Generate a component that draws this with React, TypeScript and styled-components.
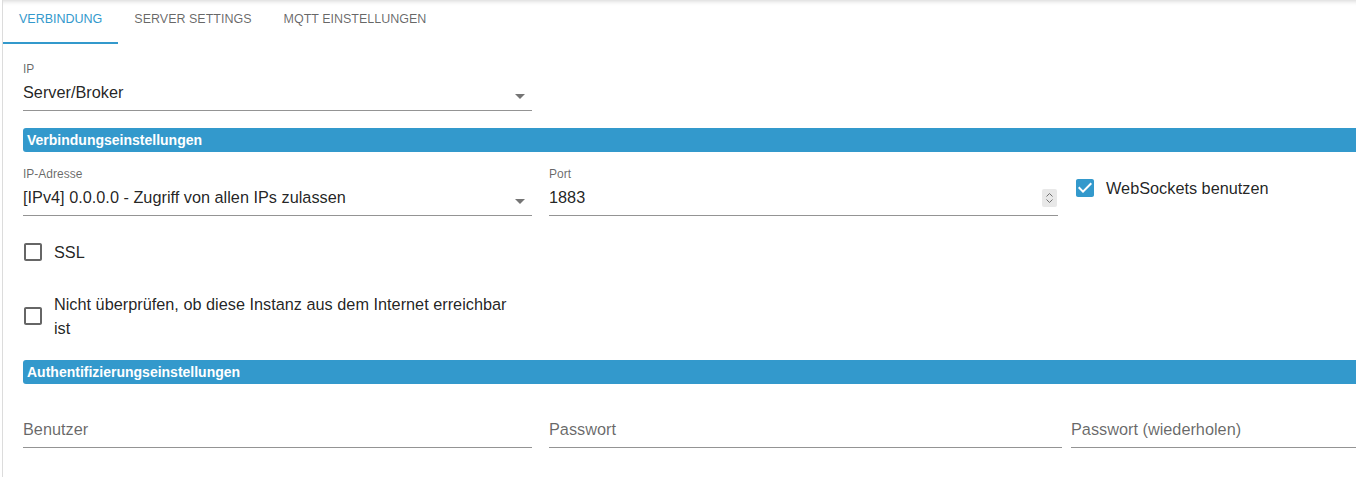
import React from 'react';
import styled, { createGlobalStyle } from 'styled-components';

const GlobalStyle = createGlobalStyle`
  html, body {
    margin: 0;
    padding: 0;
    background: #ffffff;
    overflow: hidden;
  }
  body {
    font-family: "Liberation Sans", Arial, sans-serif;
  }
`;

const BLUE = '#3399cc';

const Page = styled.div`
  width: calc(100vw - 2px);
  height: 477px;
  margin-left: 2px;
  box-sizing: border-box;
  border-left: 1px solid #dcdcdc;
  background: #fff;
  box-shadow: inset 0 6px 5px -5px rgba(0, 0, 0, 0.18);
  overflow: hidden;
`;

const TabBar = styled.div`
  display: flex;
  height: 44px;
`;

const Tab = styled.div<{ $active?: boolean }>`
  box-sizing: border-box;
  height: 44px;
  padding: 12px 16px 0;
  font-size: 12.5px;
  line-height: 14px;
  text-transform: uppercase;
  white-space: nowrap;
  color: ${(p) => (p.$active ? BLUE : 'rgba(0,0,0,0.6)')};
  box-shadow: ${(p) => (p.$active ? `inset 0 -2px 0 ${BLUE}` : 'none')};
`;

const Content = styled.div`
  display: flex;
  flex-direction: column;
  padding: 18px 0 0 20px;
`;

const Row = styled.div<{ $mt?: number }>`
  display: flex;
  align-items: flex-start;
  margin-top: ${(p) => p.$mt ?? 0}px;
`;

const FieldBox = styled.div<{ $w?: number; $ml?: number }>`
  display: flex;
  flex-direction: column;
  margin-left: ${(p) => p.$ml ?? 0}px;
  ${(p) => (p.$w ? `width: ${p.$w}px; flex: none;` : 'flex: 1; min-width: 0;')}
`;

const FieldLabel = styled.div`
  height: 16px;
  font-size: 12px;
  line-height: 15px;
  color: rgba(0, 0, 0, 0.6);
  white-space: nowrap;
`;

const InputRow = styled.div<{ $placeholder?: boolean }>`
  display: flex;
  align-items: center;
  height: 33px;
  box-sizing: border-box;
  padding: 3px 0 6px;
  border-bottom: 1px solid rgba(0, 0, 0, 0.42);
  font-size: 16.3px;
  line-height: 23px;
  color: ${(p) => (p.$placeholder ? 'rgba(0,0,0,0.6)' : 'rgba(0,0,0,0.87)')};
`;

const Value = styled.span`
  flex: 1;
  white-space: nowrap;
  overflow: hidden;
`;

const ArrowIcon = styled.svg`
  flex: none;
  width: 24px;
  height: 24px;
  margin-top: 6px;
  fill: rgba(0, 0, 0, 0.54);
`;

const Spinner = styled.svg`
  flex: none;
  width: 15px;
  height: 18px;
  margin-right: 1px;
  margin-top: 1px;
`;

const SectionHeader = styled.div<{ $mt: number }>`
  margin-top: ${(p) => p.$mt}px;
  height: 24px;
  padding-left: 4px;
  border-radius: 3px 0 0 3px;
  background: ${BLUE};
  color: #fff;
  font-size: 14px;
  font-weight: bold;
  line-height: 24px;
`;

const CheckControl = styled.label<{ $mt?: number; $ml?: number }>`
  display: flex;
  align-items: center;
  margin-top: ${(p) => p.$mt ?? 0}px;
  margin-left: ${(p) => p.$ml ?? -11}px;
  cursor: pointer;
`;

const CheckButton = styled.span`
  flex: none;
  display: flex;
  padding: 9px;
`;

const CheckSvg = styled.svg<{ $checked?: boolean }>`
  width: 24px;
  height: 24px;
  fill: ${(p) => (p.$checked ? BLUE : 'rgba(0,0,0,0.6)')};
`;

const CheckText = styled.span<{ $maxw?: number }>`
  font-size: 16.3px;
  line-height: 24px;
  color: rgba(0, 0, 0, 0.87);
  ${(p) => (p.$maxw ? `max-width: ${p.$maxw}px;` : 'white-space: nowrap;')}
`;

const Field: React.FC<{
  label?: string;
  value?: string;
  placeholder?: string;
  w?: number;
  ml?: number;
  select?: boolean;
  number?: boolean;
}> = ({ label, value, placeholder, w, ml, select, number }) => (
  <FieldBox $w={w} $ml={ml}>
    <FieldLabel>{label ?? ''}</FieldLabel>
    <InputRow $placeholder={!value}>
      <Value>{value ?? placeholder}</Value>
      {select && (
        <ArrowIcon viewBox="0 0 24 24">
          <path d="M7 10l5 5 5-5z" />
        </ArrowIcon>
      )}
      {number && (
        <Spinner viewBox="0 0 15 18">
          <rect x="0" y="0" width="15" height="18" rx="2" fill="#e8e8e8" />
          <path d="M4.5 7.5 L7.5 4.5 L10.5 7.5" fill="none" stroke="#6f6f6f" strokeWidth="1" />
          <path d="M4.5 10.5 L7.5 13.5 L10.5 10.5" fill="none" stroke="#6f6f6f" strokeWidth="1" />
        </Spinner>
      )}
    </InputRow>
  </FieldBox>
);

const Check: React.FC<{
  label: string;
  checked?: boolean;
  mt?: number;
  ml?: number;
  maxw?: number;
}> = ({ label, checked, mt, ml, maxw }) => (
  <CheckControl $mt={mt} $ml={ml}>
    <CheckButton>
      <CheckSvg $checked={checked} viewBox="0 0 24 24">
        {checked ? (
          <path d="M19 3H5c-1.11 0-2 .9-2 2v14c0 1.1.89 2 2 2h14c1.11 0 2-.9 2-2V5c0-1.1-.89-2-2-2zm-9 14l-5-5 1.41-1.41L10 14.17l7.59-7.59L19 8l-9 9z" />
        ) : (
          <path d="M19 5v14H5V5h14m0-2H5c-1.11 0-2 .9-2 2v14c0 1.1.89 2 2 2h14c1.1 0 2-.9 2-2V5c0-1.1-.9-2-2-2z" />
        )}
      </CheckSvg>
    </CheckButton>
    <CheckText $maxw={maxw}>{label}</CheckText>
  </CheckControl>
);

export default function App() {
  return (
    <>
      <GlobalStyle />
      <Page>
        <TabBar>
          <Tab $active>Verbindung</Tab>
          <Tab>Server Settings</Tab>
          <Tab>MQTT Einstellungen</Tab>
        </TabBar>
        <Content>
          <Row>
            <Field w={509} label="IP" value="Server/Broker" select />
          </Row>
          <SectionHeader $mt={17}>Verbindungseinstellungen</SectionHeader>
          <Row $mt={15}>
            <Field w={509} label="IP-Adresse" value="[IPv4] 0.0.0.0 - Zugriff von allen IPs zulassen" select />
            <Field w={509} ml={17} label="Port" value="1883" number />
            <Check label="WebSockets benutzen" checked ml={6} />
          </Row>
          <Check label="SSL" mt={15} />
          <Check
            label="Nicht überprüfen, ob diese Instanz aus dem Internet erreichbar ist"
            mt={19}
            maxw={462}
          />
          <SectionHeader $mt={20}>Authentifizierungseinstellungen</SectionHeader>
          <Row $mt={15}>
            <Field w={509} placeholder="Benutzer" />
            <Field w={513} ml={17} placeholder="Passwort" />
            <Field ml={9} placeholder="Passwort (wiederholen)" />
          </Row>
        </Content>
      </Page>
    </>
  );
}
